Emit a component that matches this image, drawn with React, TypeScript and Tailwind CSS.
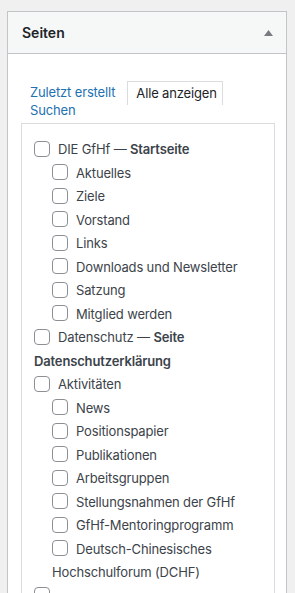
const pages: { label: string; bold?: string[]; children?: string[] }[] = [
  {
    label: "DIE GfHf — ",
    bold: ["Startseite"],
    children: ["Aktuelles", "Ziele", "Vorstand", "Links", "Downloads und Newsletter", "Satzung", "Mitglied werden"],
  },
  { label: "Datenschutz — ", bold: ["Seite", "Datenschutzerklärung"] },
  {
    label: "Aktivitäten",
    children: [
      "News",
      "Positionspapier",
      "Publikationen",
      "Arbeitsgruppen",
      "Stellungsnahmen der GfHf",
      "GfHf-Mentoringprogramm",
      "Deutsch-Chinesisches Hochschulforum (DCHF)",
    ],
  },
  { label: "" },
];

const Box = () => (
  <span className="mr-2 inline-block h-4 w-4 rounded-[4px] border border-[#8c8f94] bg-white align-middle -mt-[3px]" />
);

const Item = ({ label, bold }: { label: string; bold?: string[] }) => (
  <li className="leading-[23.5px]">
    <Box />
    {label}
    {bold?.map((w, i) => (
      <span key={w}>
        {i > 0 && " "}
        <span className="font-semibold">{w}</span>
      </span>
    ))}
  </li>
);

export default function App() {
  return (
    <div
      className="min-h-screen bg-[#f0f0f1] px-[7px] pt-[11px] text-[13px] tracking-[-0.15px] text-[#3c434a]"
      style={{ fontFamily: "Inter, 'Noto Sans', sans-serif" }}
    >
      <div className="h-[600px] w-[280px] overflow-hidden border border-[#c3c4c7] bg-white">
        <div className="flex h-[42px] items-center justify-between border-b border-[#c3c4c7] bg-[#f6f7f7] pl-[14px] pr-[13px]">
          <h2 className="text-[14px] font-semibold tracking-normal text-[#1d2327]">Seiten</h2>
          <svg width="9" height="6" viewBox="0 0 9 6">
            <path d="M4.5 0 L9 6 H0 Z" fill="#787c82" />
          </svg>
        </div>

        <div className="px-[13px] pt-[27px]">
          <div className="flex h-[24px] items-stretch">
            <a className="ml-[9px] flex items-center text-[#2271b1]">Zuletzt erstellt</a>
            <div className="ml-[12px] flex items-center border-x border-t border-[#dcdcde] pl-[8px] pr-[5px] text-[#1d2327]">
              Alle anzeigen
            </div>
          </div>
          <a className="-mt-[3px] ml-[9px] block leading-[17px] text-[#2271b1]">Suchen</a>

          <div className="mt-[4px] h-[500px] w-[254px] border border-[#dcdcde] pl-[12px] pr-2 pt-[14px]">
            <ul>
              {pages.map((p, i) => (
                <div key={i}>
                  <Item label={p.label} bold={p.bold} />
                  {p.children && (
                    <ul className="ml-[18px]">
                      {p.children.map((c) => (
                        <Item key={c} label={c} />
                      ))}
                    </ul>
                  )}
                </div>
              ))}
            </ul>
          </div>
        </div>
      </div>
    </div>
  );
}
